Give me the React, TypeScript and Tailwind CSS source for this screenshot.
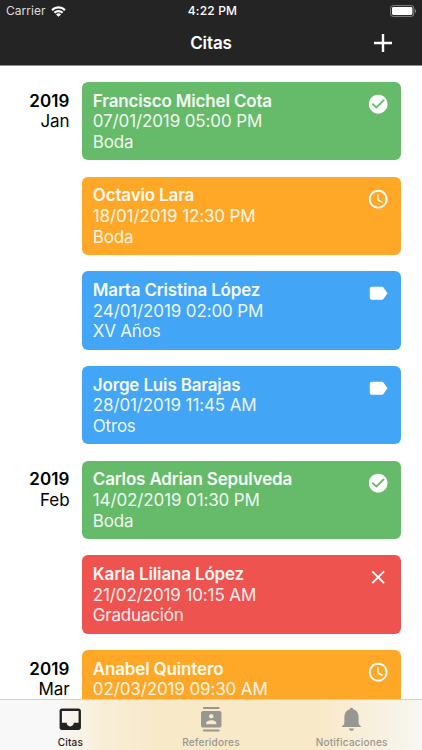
import type { ReactNode } from "react";
import { clsx } from "clsx";

type Status = "done" | "pending" | "tagged" | "cancelled";

type Appointment = {
  name: string;
  date: string;
  kind?: string;
  status: Status;
  year?: string;
  month?: string;
};

const appointments: Appointment[] = [
  { name: "Francisco Michel Cota", date: "07/01/2019 05:00 PM", kind: "Boda", status: "done", year: "2019", month: "Jan" },
  { name: "Octavio Lara", date: "18/01/2019 12:30 PM", kind: "Boda", status: "pending" },
  { name: "Marta Cristina López", date: "24/01/2019 02:00 PM", kind: "XV Años", status: "tagged" },
  { name: "Jorge Luis Barajas", date: "28/01/2019 11:45 AM", kind: "Otros", status: "tagged" },
  { name: "Carlos Adrian Sepulveda", date: "14/02/2019 01:30 PM", kind: "Boda", status: "done", year: "2019", month: "Feb" },
  { name: "Karla Liliana López", date: "21/02/2019 10:15 AM", kind: "Graduación", status: "cancelled" },
  { name: "Anabel Quintero", date: "02/03/2019 09:30 AM", status: "pending", year: "2019", month: "Mar" },
];

const cardColors: Record<Status, string> = {
  done: "bg-[#66bb6a]",
  pending: "bg-[#ffa726]",
  tagged: "bg-[#42a5f5]",
  cancelled: "bg-[#ef5350]",
};

const statusPaths: Record<Status, string> = {
  done: "M12 2C6.48 2 2 6.48 2 12s4.48 10 10 10 10-4.48 10-10S17.52 2 12 2zm-2 15l-5-5 1.41-1.41L10 14.17l7.59-7.59L19 8l-9 9z",
  pending:
    "M11.99 2C6.47 2 2 6.48 2 12s4.47 10 9.99 10C17.52 22 22 17.52 22 12S17.52 2 11.99 2zM12 20c-4.42 0-8-3.58-8-8s3.58-8 8-8 8 3.58 8 8-3.58 8-8 8zm.5-13H11v6l5.25 3.15.75-1.23-4.5-2.67z",
  tagged:
    "M17.63 5.84C17.27 5.33 16.67 5 16 5L5 5.01C3.9 5.01 3 5.9 3 7v10c0 1.1.9 1.99 2 1.99L16 19c.67 0 1.27-.33 1.63-.84L22 12l-4.37-6.16z",
  cancelled:
    "M19 6.41L17.59 5 12 10.59 6.41 5 5 6.41 10.59 12 5 17.59 6.41 19 12 13.41 17.59 19 19 17.59 13.41 12z",
};

const tabs = [
  {
    label: "Citas",
    active: true,
    size: "h-[28.5px] w-[28.5px]",
    path: "M19 3H4.99c-1.11 0-1.98.89-1.98 2L3 19c0 1.1.88 2 1.99 2H19c1.1 0 2-.9 2-2V5c0-1.11-.9-2-2-2zm0 12h-4c0 1.66-1.35 3-3 3s-3-1.34-3-3H4.99V5H19v10z",
  },
  {
    label: "Referidores",
    active: false,
    size: "h-[24.5px] w-[24.5px]",
    path: "M20 0H4v2h16V0zM4 24h16v-2H4v2zM20 4H4c-1.1 0-2 .9-2 2v12c0 1.1.9 2 2 2h16c1.1 0 2-.9 2-2V6c0-1.1-.9-2-2-2zm-8 2.75c1.24 0 2.25 1.01 2.25 2.25s-1.01 2.25-2.25 2.25S9.75 10.24 9.75 9 10.76 6.75 12 6.75zM17 17H7v-1.5c0-1.67 3.33-2.5 5-2.5s5 .83 5 2.5V17z",
  },
  {
    label: "Notificaciones",
    active: false,
    size: "h-[25px] w-[25px]",
    path: "M12 .8c-1 0-1.7.7-1.8 1.7C7.2 3.2 5.5 5.4 5.2 8.800c-.1 2.500.1 5.200-.2 7.200-.4 1.300-2.100 2-2.400 3.300h18.800c-.3-1.300-2-2-2.400-3.300-.3-2-.1-4.700-.2-7.200-.3-3.400-2-5.600-5-6.300C13.700 1.500 13 .8 12 .8zM9.600 20.600c.2 1.500 1.100 2.300 2.400 2.300s2.200-.8 2.400-2.300z",
  },
];

function Icon({ path, className }: { path: string; className?: string }) {
  return (
    <svg viewBox="0 0 24 24" fill="currentColor" className={className}>
      <path d={path} />
    </svg>
  );
}

function StatusBar() {
  return (
    <div className="grid h-[22px] grid-cols-3 items-center pl-[6px] pr-[5px] text-[12px] leading-none">
      <div className="flex items-center gap-[5px] text-[#dedede]">
        <span className="tracking-[0.05px]">Carrier</span>
        <svg viewBox="0 0 15 11" className="h-[11px] w-[15px]" fill="none" stroke="white" strokeWidth="2.2">
          <path d="M1 4.1a9.3 9.3 0 0 1 13 0" />
          <path d="M3.4 6.7a5.9 5.9 0 0 1 8.2 0" />
          <path d="M7.5 10.8 5 8.4a3.6 3.6 0 0 1 5 0z" fill="white" stroke="none" />
        </svg>
      </div>
      <span className="pl-[2px] text-center font-medium tracking-[0.2px]">4:22 PM</span>
      <svg viewBox="0 0 27 12" className="h-[12px] w-[27px] justify-self-end">
        <rect x="0.6" y="0.6" width="23.2" height="10.8" rx="2.6" fill="none" stroke="#858585" strokeWidth="1" />
        <rect x="2" y="2" width="20.4" height="8" rx="1.4" fill="white" />
        <path d="M25 4.2c1.7.5 1.7 3.1 0 3.6z" fill="#858585" />
      </svg>
    </div>
  );
}

function Header({ title, action }: { title: string; action: ReactNode }) {
  return (
    <header className="h-[66px] shrink-0 border-b border-[#8c8c8c] bg-[#242424] text-white">
      <StatusBar />
      <div className="grid h-[43px] grid-cols-3 items-center">
        <h1 className="col-start-2 text-center text-[17px] font-semibold leading-none tracking-[-0.1px]">{title}</h1>
        <button className="mr-[30px] justify-self-end pb-[2px]">{action}</button>
      </div>
    </header>
  );
}

function AppointmentRow({ item }: { item: Appointment }) {
  return (
    <li className="flex h-[78.3px] shrink-0">
      <div className="w-[69.5px] shrink-0 pt-[8.5px] text-right text-black">
        <p className="font-semibold tracking-[0.1px]">{item.year}</p>
        <p className="tracking-[-0.1px]">{item.month}</p>
      </div>
      <div className={clsx("ml-[12.3px] flex w-[319.5px] justify-between rounded-[6px] pl-[11px] pr-[11.7px] pt-[8.5px] text-white", cardColors[item.status])}>
        <div className="whitespace-nowrap">
          <p className="font-semibold tracking-[-0.16px] opacity-95">{item.name}</p>
          <p className="tracking-[-0.12px] opacity-90">{item.date}</p>
          <p className="tracking-[-0.2px] opacity-90">{item.kind}</p>
        </div>
        <Icon path={statusPaths[item.status]} className="mt-[2.5px] h-[22.4px] w-[22.4px] shrink-0" />
      </div>
    </li>
  );
}

function TabBar() {
  return (
    <nav className="grid h-[51px] shrink-0 grid-cols-3 border-t border-[#d5d1c8] bg-[linear-gradient(to_right,#f8f8f8_13%,#f8efd9_24%,#f8e9c8_38%,#f8e9c8_75%,#f8f1e0_90%,#f8f7f4)]">
      {tabs.map((tab) => (
        <button key={tab.label} className={clsx("flex flex-col items-center pt-[5px]", tab.active ? "text-[#222]" : "text-[#99968f]")}>
          <span className="flex h-[29px] items-center">
            <Icon path={tab.path} className={tab.size} />
          </span>
          <span className="mt-px text-[10px] font-medium leading-[14px] tracking-[0.2px]">{tab.label}</span>
        </button>
      ))}
    </nav>
  );
}

export default function App() {
  return (
    <div className="flex h-[750px] w-[422px] flex-col overflow-hidden bg-white font-[Inter,sans-serif]">
      <Header
        title="Citas"
        action={
          <svg viewBox="0 0 18 18" className="h-[18px] w-[18px]" stroke="white" strokeWidth="2.4">
            <path d="M9 0v18M0 9h18" />
          </svg>
        }
      />
      <main className="min-h-0 flex-1 overflow-hidden">
        <ul className="flex flex-col gap-[16.4px] pt-4 text-[17px] leading-[20.7px]">
          {appointments.map((item) => (
            <AppointmentRow key={item.date} item={item} />
          ))}
        </ul>
      </main>
      <TabBar />
    </div>
  );
}
